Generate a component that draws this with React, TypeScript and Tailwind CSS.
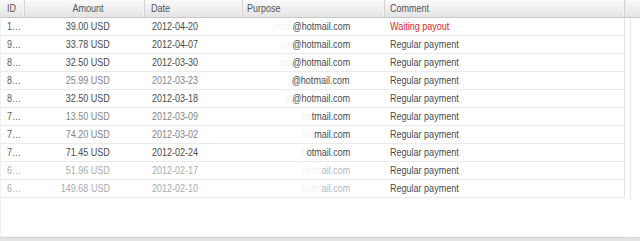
import React from 'react'

interface IRow {
  id: string
  amount: string
  date: string
  faint: string
  mail: string
  comment: string
  waiting?: boolean
  dim?: 'light' | 'lighter'
}

const rows: IRow[] = [
  {id: '1…', amount: '39.00 USD', date: '2012-04-20', faint: 'jonat', mail: '@hotmail.com', comment: 'Waiting payout', waiting: true},
  {id: '9…', amount: '33.78 USD', date: '2012-04-07', faint: 'jon', mail: '@hotmail.com', comment: 'Regular payment'},
  {id: '8…', amount: '32.50 USD', date: '2012-03-30', faint: 'jon', mail: '@hotmail.com', comment: 'Regular payment'},
  {id: '8…', amount: '25.99 USD', date: '2012-03-23', faint: '', mail: '@hotmail.com', comment: 'Regular payment', dim: 'light'},
  {id: '8…', amount: '32.50 USD', date: '2012-03-18', faint: 'jo', mail: '@hotmail.com', comment: 'Regular payment'},
  {id: '7…', amount: '13.50 USD', date: '2012-03-09', faint: 'ho', mail: 'tmail.com', comment: 'Regular payment', dim: 'light'},
  {id: '7…', amount: '74.20 USD', date: '2012-03-02', faint: 'hot', mail: 'mail.com', comment: 'Regular payment', dim: 'light'},
  {id: '7…', amount: '71.45 USD', date: '2012-02-24', faint: 'h', mail: 'otmail.com', comment: 'Regular payment'},
  {id: '6…', amount: '51.96 USD', date: '2012-02-17', faint: 'hotm', mail: 'ail.com', comment: 'Regular payment', dim: 'lighter'},
  {id: '6…', amount: '149.68 USD', date: '2012-02-10', faint: 'hotm', mail: 'ail.com', comment: 'Regular payment', dim: 'lighter'},
]

// the grid text is a condensed sans, so squeeze each label a little
const Txt = ({children, origin = 'left'}: {children: React.ReactNode; origin?: 'left' | 'right' | 'center'}) => (
  <span
    className={`inline-block whitespace-nowrap scale-x-[0.82] ${
      origin === 'right' ? 'origin-right' : origin === 'center' ? 'origin-center' : 'origin-left'
    }`}
  >
    {children}
  </span>
)

const HeaderCell = ({label, className, center}: {label: string; className: string; center?: boolean}) => (
  <div className={`flex items-center h-full border-r border-[#d2d2d2] shadow-[inset_-1px_0_0_#f4f4f4] ${className}`}>
    <Txt origin={center ? 'center' : 'left'}>{label}</Txt>
  </div>
)

const App = (): React.ReactElement => {
  return (
    <div className="w-[640px] h-[241px] bg-white flex flex-col overflow-hidden font-['Liberation_Sans',Arial,sans-serif] text-[11px] text-[#4a4a4a]">
      <div className="flex h-[18px] shrink-0 bg-gradient-to-b from-[#fafafa] to-[#e4e4e4] border-b border-[#c8c8c8] text-[#555]">
        <HeaderCell label="ID" className="w-[25px] pl-[7px]" />
        <HeaderCell label="Amount" className="w-[120px] justify-center pl-[6px]" center />
        <HeaderCell label="Date" className="w-[98px] pl-[6px]" />
        <HeaderCell label="Purpose" className="w-[142px] pl-[4px]" />
        <HeaderCell label="Comment" className="w-[240px] pl-[5px]" />
        <div className="flex-1 border-l border-[#ebebeb]" />
      </div>

      <div className="flex flex-1">
        <div className="flex flex-col w-[625px] border-l border-[#f0f0f0]">
          {rows.map((row, index) => {
            const tone =
              row.dim === 'lighter' ? 'text-[#ababab]' : row.dim === 'light' ? 'text-[#858585]' : 'text-[#4a4a4a]'
            return (
              <div key={index} className="flex h-[18px] items-center border-b border-[#ebebeb] border-r border-r-[#e2e2e2]">
                <div className={`w-[25px] pl-[6px] ${row.dim === 'lighter' ? 'text-[#ababab]' : 'text-[#5a5a5a]'}`}>
                  <Txt>{row.id}</Txt>
                </div>
                <div className={`w-[120px] text-right pr-[36px] ${tone}`}>
                  <Txt origin="right">{row.amount}</Txt>
                </div>
                <div className={`w-[98px] pl-[6px] ${tone}`}>
                  <Txt>{row.date}</Txt>
                </div>
                <div className="w-[142px] text-right pr-[35px] overflow-hidden">
                  <Txt origin="right">
                    <span className="text-[#f2f2f2]">{row.faint}</span>
                    <span className={row.dim === 'lighter' ? 'text-[#b8b8b8]' : 'text-[#4a4a4a]'}>{row.mail}</span>
                  </Txt>
                </div>
                <div className={`w-[240px] pl-[5px] ${row.waiting ? 'text-[#d42b2b]' : 'text-[#4a4a4a]'}`}>
                  <Txt>{row.comment}</Txt>
                </div>
              </div>
            )
          })}
          <div className="flex-1 border-b border-[#f2f2f2]" />
        </div>
        <div className="w-[5px]" />
        <div className="w-px h-[182px] bg-[#e6e6e6]" />
        <div className="flex-1" />
      </div>

      <div className="h-[4px] shrink-0 bg-[#e3e3e3] border-t border-[#d6d6d6]" />
    </div>
  )
}

export default App
